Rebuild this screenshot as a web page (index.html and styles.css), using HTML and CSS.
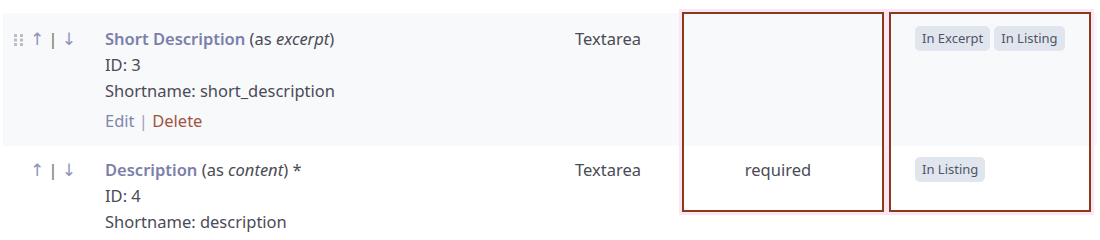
FILE: index.html
```html
<!DOCTYPE html>
<html lang="en">
<head>
<meta charset="utf-8">
<title>Fields</title>
<link rel="stylesheet" href="styles.css">
</head>
<body>
<div class="page">
  <div class="fields">
    <div class="row row-alt">
      <div class="cell handle">
        <svg class="grip" width="10" height="12" viewBox="0 0 10 12" aria-hidden="true">
          <g fill="#b9bcc6">
            <rect x="0" y="0" width="3" height="3" rx="0.5"/><rect x="6" y="0" width="3" height="3" rx="0.5"/>
            <rect x="0" y="4.5" width="3" height="3" rx="0.5"/><rect x="6" y="4.5" width="3" height="3" rx="0.5"/>
            <rect x="0" y="9" width="3" height="3" rx="0.5"/><rect x="6" y="9" width="3" height="3" rx="0.5"/>
          </g>
        </svg>
        <span class="move">↑</span><span class="bar">|</span><span class="move">↓</span>
      </div>
      <div class="cell name">
        <div><a class="title">Short Description</a> (as <em>excerpt</em>)</div>
        <div>ID: 3</div>
        <div>Shortname: short_description</div>
        <div class="actions"><a class="edit">Edit</a> <span class="sep">|</span> <a class="delete">Delete</a></div>
      </div>
      <div class="cell type">Textarea</div>
      <div class="cell req"></div>
      <div class="cell tags">
        <span class="badge">In Excerpt</span><span class="badge">In Listing</span>
      </div>
    </div>
    <div class="row">
      <div class="cell handle">
        <span class="grip-space"></span>
        <span class="move">↑</span><span class="bar">|</span><span class="move">↓</span>
      </div>
      <div class="cell name">
        <div><a class="title">Description</a> (as <em>content</em>) *</div>
        <div>ID: 4</div>
        <div>Shortname: description</div>
      </div>
      <div class="cell type">Textarea</div>
      <div class="cell req">required</div>
      <div class="cell tags">
        <span class="badge">In Listing</span>
      </div>
    </div>
  </div>
  <div class="highlight hl-req"></div>
  <div class="highlight hl-tags"></div>
</div>
</body>
</html>
```
FILE: styles.css
```css
html, body {
  margin: 0;
  padding: 0;
  background: #ffffff;
}
body {
  font-family: "Noto Sans", "Open Sans", "DejaVu Sans", sans-serif;
  font-size: 16.5px;
  color: #4a4b55;
}
.page {
  position: relative;
  width: 1100px;
  height: 239px;
  overflow: hidden;
}
.fields {
  margin: 13px 3px 0 3px;
}
.row {
  display: grid;
  grid-template-columns: 102px 470px 98px 210px 214px;
  line-height: 26px;
}
.row-alt {
  background: #f8f9fb;
}
.cell {
  padding: 13px 0 12px 0;
}
.row + .row .cell {
  padding-top: 11px;
}
.handle {
  display: flex;
  align-items: flex-start;
  padding-left: 11px;
  color: #8d94b8;
}
.grip {
  margin-top: 8px;
  margin-right: 6px;
}
.grip-space {
  width: 10px;
  margin-right: 6px;
}
.move {
  font-size: 17px;
  color: #8d94b8;
}
.bar {
  margin: 0 4px;
  color: #6e6f60;
  font-size: 17px;
}
.name em {
  font-style: italic;
}
.title {
  color: #7b80ab;
  font-weight: 600;
  text-decoration: none;
}
.actions {
  margin-top: 4px;
}
.edit {
  color: #7f86ad;
}
.sep {
  color: #9aa0b8;
}
.delete {
  color: #9e5540;
}
.req {
  text-align: center;
}
.tags {
  display: flex;
  align-items: flex-start;
  gap: 4px;
  padding-left: 32px;
  padding-top: 13px;
}
.badge {
  display: inline-block;
  background: #e1e5ee;
  color: #4f5566;
  font-size: 13px;
  line-height: 19px;
  padding: 3px 7px;
  border-radius: 5px;
}
.highlight {
  position: absolute;
  top: 12px;
  height: 196px;
  border: 2px solid #883a1a;
  box-shadow: 0 0 0 3px #fde5f6;
}
.hl-req {
  left: 682px;
  width: 198px;
}
.hl-tags {
  left: 889px;
  width: 198px;
}
```
